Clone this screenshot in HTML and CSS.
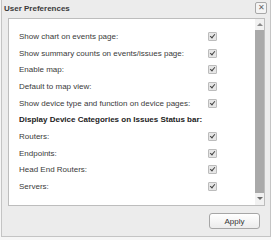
FILE: index.html
```html
<!DOCTYPE html>
<html lang="en">
<head>
  <meta charset="UTF-8" />
  <title>User Preferences</title>
  <link rel="stylesheet" href="styles.css">
</head>
<body>
  <div class="dialog">
    <div class="dialog-head">
      <span class="dialog-title">User Preferences</span>
      <span class="close-btn">&#x2715;</span>
    </div>
    <div class="pref-box">
      <div class="pref-list">
        <div class="pref-row"><span>Show chart on events page:</span><span class="check"></span></div>
        <div class="pref-row"><span>Show summary counts on events/issues page:</span><span class="check"></span></div>
        <div class="pref-row"><span>Enable map:</span><span class="check"></span></div>
        <div class="pref-row"><span>Default to map view:</span><span class="check"></span></div>
        <div class="pref-row"><span>Show device type and function on device pages:</span><span class="check"></span></div>
        <div class="pref-row pref-heading"><span>Display Device Categories on Issues Status bar:</span></div>
        <div class="pref-row"><span>Routers:</span><span class="check"></span></div>
        <div class="pref-row"><span>Endpoints:</span><span class="check"></span></div>
        <div class="pref-row"><span>Head End Routers:</span><span class="check"></span></div>
        <div class="pref-row"><span>Servers:</span><span class="check"></span></div>
      </div>
      <!-- fake scrollbar -->
      <div class="scrollbar">
        <span class="arrow up"></span>
        <span class="thumb"></span>
        <span class="arrow down"></span>
      </div>
    </div>
    <div class="dialog-foot">
      <button class="apply-btn">Apply</button>
    </div>
  </div>
</body>
</html>
```

FILE: styles.css
```css
body {
  margin: 0;
  background: #f6f6f6;
  font-family: 'Liberation Sans', Arial, sans-serif;
  font-size: 8px;
  color: #3a3a3a;
}
.dialog {
  width: 268px;
  height: 236px;
  margin-left: 1px;
  background: #ececec;
  border: 1px solid #c4c4c4;
  border-top: none;
  display: flex;
  flex-direction: column;
}
.dialog-head {
  height: 18px;
  display: flex;
  align-items: center;
  justify-content: space-between;
  padding: 0 2px 0 2px;
}
.dialog-title {
  font-weight: 700;
  color: #3a3a3a;
  margin-top: -1px;
}
.close-btn {
  width: 10px;
  height: 10px;
  border: 1px solid #a8a8a8;
  border-radius: 2px;
  background: #f4f4f4;
  color: #666;
  font-size: 8px;
  line-height: 10px;
  text-align: center;
  margin: -3px 1px 0 0;
}
.pref-box {
  margin-left: 6px;
  width: 255px;
  height: 186px;
  border: 1px solid #bdbdbd;
  background: #fff;
  display: flex;
}
.pref-list {
  flex: 1;
  padding: 9px 0 0 10px;
}
.pref-row {
  height: 16.7px;
  display: flex;
  align-items: center;
  justify-content: space-between;
  padding-right: 38px;
}
.pref-heading {
  font-weight: 700;
  color: #222;
}
.check {
  width: 7px;
  height: 7px;
  border: 1px solid #bcbcbc;
  border-radius: 1px;
  background: #e6e6e6;
  position: relative;
}
.check::after {
  content: "";
  position: absolute;
  left: 2px;
  top: 0;
  width: 2px;
  height: 4px;
  border: solid #444;
  border-width: 0 1.5px 1.5px 0;
  transform: rotate(40deg);
}
.scrollbar {
  width: 9px;
  background: #f1f1f1;
  display: flex;
  flex-direction: column;
  align-items: center;
}
.arrow {
  width: 0;
  height: 0;
  border-left: 3px solid transparent;
  border-right: 3px solid transparent;
}
.arrow.up {
  border-bottom: 3px solid #8a8a8a;
  margin: 4px 0 4px;
}
.arrow.down {
  border-top: 3px solid #6a6a6a;
  margin: 4px 0 5px;
}
.thumb {
  flex: 1;
  width: 9px;
  background: #a9a9a9;
}
.dialog-foot {
  flex: 1;
  display: flex;
  justify-content: flex-end;
  align-items: flex-start;
  padding: 7px 10px 0 0;
}
.apply-btn {
  width: 51px;
  height: 16px;
  font-family: 'Liberation Sans', Arial, sans-serif;
  font-size: 8px;
  color: #333;
  border: 1px solid #a6a6a6;
  border-radius: 3px;
  background: linear-gradient(#ffffff, #ececec);
  padding: 0;
}
```
